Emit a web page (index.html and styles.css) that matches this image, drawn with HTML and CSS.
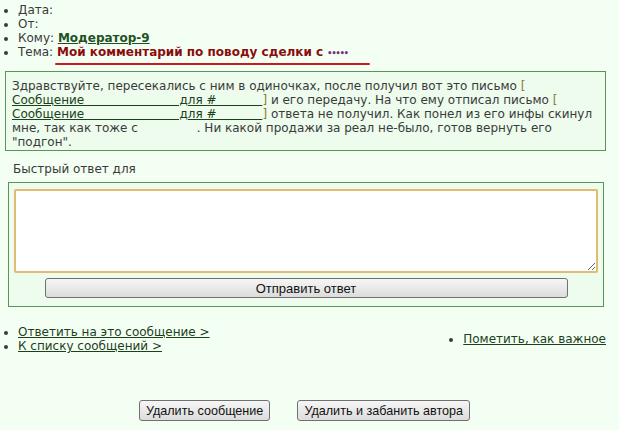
FILE: index.html
```html
<!DOCTYPE html>
<html lang="ru">
<head>
  <meta charset="UTF-8" />
  <title>Сообщение</title>
  <link rel="stylesheet" href="styles.css">
</head>
<body>
  <ul class="info">
    <li>Дата:</li>
    <li>От:</li>
    <li>Кому: <a href="#" class="user">Модератор-9</a></li>
    <li>Тема: <span class="subject">Мой комментарий по поводу сделки с <span class="dots">•••••</span></span></li>
  </ul>
  <div class="subject-line"></div>

  <div class="message">
    Здравствуйте, пересекались с ним в одиночках, после получил вот это письмо <span class="br">[</span>
    <a href="#">Сообщение&nbsp;&nbsp;&nbsp;&nbsp;&nbsp;&nbsp;&nbsp;&nbsp;&nbsp;&nbsp;&nbsp;&nbsp;&nbsp;&nbsp;&nbsp;&nbsp;&nbsp;&nbsp;&nbsp;&nbsp;&nbsp;&nbsp;&nbsp;&nbsp;&nbsp;для #&nbsp;&nbsp;&nbsp;&nbsp;&nbsp;&nbsp;&nbsp;&nbsp;&nbsp;&nbsp;&nbsp;&nbsp;</a><span class="br">]</span> и его передачу. На что ему отписал письмо <span class="br">[</span>
    <a href="#">Сообщение&nbsp;&nbsp;&nbsp;&nbsp;&nbsp;&nbsp;&nbsp;&nbsp;&nbsp;&nbsp;&nbsp;&nbsp;&nbsp;&nbsp;&nbsp;&nbsp;&nbsp;&nbsp;&nbsp;&nbsp;&nbsp;&nbsp;&nbsp;&nbsp;&nbsp;для #&nbsp;&nbsp;&nbsp;&nbsp;&nbsp;&nbsp;&nbsp;&nbsp;&nbsp;&nbsp;&nbsp;&nbsp;</a><span class="br">]</span> ответа не получил. Как понел из его инфы скинул мне, так как тоже с <span class="blank"></span>. Ни какой продажи за реал не-было, готов вернуть его "подгон".
  </div>

  <div class="quick-title">Быстрый ответ для</div>
  <form class="quick">
    <textarea autofocus></textarea>
    <button type="button" class="send">Отправить ответ</button>
  </form>

  <div class="links">
    <ul>
      <li><a href="#">Ответить на это сообщение &gt;</a></li>
      <li><a href="#">К списку сообщений &gt;</a></li>
    </ul>
    <ul>
      <li><a href="#">Пометить, как важное</a></li>
    </ul>
  </div>

  <div class="actions">
    <button type="button">Удалить сообщение</button>
    <button type="button">Удалить и забанить автора</button>
  </div>
</body>
</html>
```

FILE: styles.css
```css
body {
  margin: 0;
  background: #f4fff4;
  font-family: "DejaVu Sans", Verdana, sans-serif;
  font-size: 12px;
  line-height: 14px;
  color: #3a3a3a;
}
a {
  color: #1c401c;
}
ul {
  margin: 0;
  padding: 0 0 0 18px;
}
ul.info {
  padding-top: 3px;
}
a.user {
  font-weight: bold;
  color: #1f521f;
}
.subject {
  font-weight: bold;
  color: #8a0c0c;
}
.dots {
  color: #7b2a7b;
  font-size: 8px;
  letter-spacing: -1px;
}
.subject-line {
  width: 315px;
  height: 2px;
  margin: 2px 0 0 55px;
  background: #c81c1c;
  border-radius: 1px;
}
.message {
  margin: 6px 13px 0 5px;
  padding: 7px 6px 1px;
  background: #edfced;
  border: 1px solid #5b945b;
}
.message .br {
  color: #8a7b3a;
}
.message .blank {
  display: inline-block;
  width: 55px;
}
.quick-title {
  margin: 11px 0 0 13px;
}
.quick {
  margin: 6px 15px 0 8px;
  padding: 6px 5px 8px;
  background: #edfced;
  border: 1px solid #5b945b;
  display: flex;
  flex-direction: column;
  align-items: center;
}
.quick textarea {
  display: block;
  width: 100%;
  height: 84px;
  box-sizing: border-box;
  margin: 0;
  border: 2px solid #e2bb72;
  border-radius: 2px;
  background: #fff;
  outline: none;
  resize: both;
}
button {
  font-family: "Liberation Sans", Arial, sans-serif;
  font-size: 12.6px;
  color: #111;
  background: linear-gradient(#f6f6f6, #dcdcdc);
  border: 1px solid #707070;
  border-radius: 3px;
  height: 21px;
  padding: 0 6px;
}
.quick .send {
  width: 523px;
  height: 20px;
  margin-top: 5px;
  font-size: 13px;
}
.links {
  display: flex;
  justify-content: space-between;
  align-items: center;
  margin: 18px 13px 0 0;
}
.actions {
  display: flex;
  justify-content: center;
  gap: 27px;
  margin: 47px 10px 0 0;
}
```
